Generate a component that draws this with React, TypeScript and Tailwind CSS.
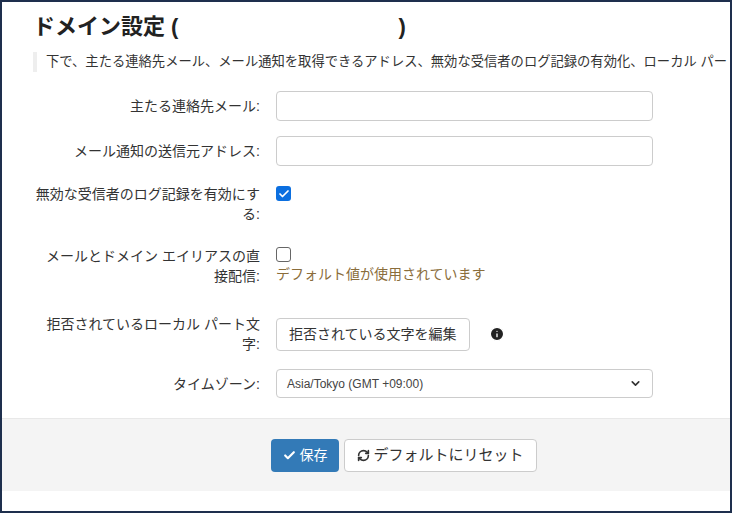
import { Check, RefreshCw, Info, ChevronDown } from 'lucide-react';

const font = { fontFamily: '"Liberation Sans", "Noto Sans CJK JP", sans-serif' };

function Label({ children }: { children: React.ReactNode }) {
  return <div className="w-[233px] shrink-0 pl-[8px] text-right text-[14px] leading-[20px] text-[#333]">{children}</div>;
}

export default function App() {
  return (
    <div style={font} className="w-[732px] h-[513px] overflow-hidden border-2 border-[#1e2f4d] bg-white flex flex-col">
      <h1 className="pl-[31px] pt-[10px] text-[22px] font-bold text-[#222] leading-[30px] whitespace-pre">ドメイン設定 (                                    )</h1>
      <div className="ml-[31px] mt-[10px] border-l-4 border-[#eee] pl-[9px] h-[20px] text-[13.3px] leading-[20px] text-[#333] whitespace-nowrap overflow-hidden">
        下で、主たる連絡先メール、メール通知を取得できるアドレス、無効な受信者のログ記録の有効化、ローカル パート文字
      </div>
      <div className="pl-[25px] mt-[19px] flex flex-col">
        <div className="flex items-center gap-4 h-[30px]">
          <Label>主たる連絡先メール:</Label>
          <div className="w-[377px] h-[30px] border border-[#ccc] rounded" />
        </div>
        <div className="flex items-center gap-4 h-[30px] mt-[15px]">
          <Label>メール通知の送信元アドレス:</Label>
          <div className="w-[377px] h-[30px] border border-[#ccc] rounded" />
        </div>
        <div className="flex gap-4 mt-[18px]">
          <Label>無効な受信者のログ記録を有効にする:</Label>
          <div className="pt-[2px]">
            <div className="w-[15px] h-[15px] rounded-[3px] bg-[#0b6fe0] flex items-center justify-center">
              <Check size={12} strokeWidth={3.5} className="text-white" />
            </div>
          </div>
        </div>
        <div className="flex gap-4 mt-[22px]">
          <Label>メールとドメイン エイリアスの直接配信:</Label>
          <div className="flex flex-col">
            <div className="w-[15px] h-[15px] rounded-[3px] border border-[#666] bg-white mt-[1px]" />
            <div className="text-[14px] text-[#8a6d3b] mt-[3px] leading-[18px]">デフォルト値が使用されています</div>
          </div>
        </div>
        <div className="flex items-center gap-4 mt-[28px]">
          <Label>拒否されているローカル パート文字:</Label>
          <div className="h-[33px] px-[12px] border border-[#ccc] rounded flex items-center text-[14px] text-[#333]">拒否されている文字を編集</div>
          <Info size={16} fill="#222" className="text-white ml-[3px]" />
        </div>
        <div className="flex items-center gap-4 mt-[15px]">
          <Label>タイムゾーン:</Label>
          <div className="w-[377px] h-[29px] border border-[#ccc] rounded flex items-center justify-between px-[10px] text-[12px] text-[#444]">
            <span>Asia/Tokyo (GMT +09:00)</span>
            <ChevronDown size={13} strokeWidth={3} className="text-[#333]" />
          </div>
        </div>
      </div>
      <div className="mt-[20px] h-[73px] bg-[#f4f4f4] border-t border-[#e8e8e8] flex items-center justify-center gap-[5px] pl-[76px]">
        <button className="h-[33px] px-[12px] bg-[#337ab7] rounded text-white text-[14px] flex items-center gap-[3px]">
          <Check size={13} strokeWidth={4} />保存
        </button>
        <button className="h-[33px] px-[12px] bg-white border border-[#ccc] rounded text-[#333] text-[15px] flex items-center gap-[3px]">
          <RefreshCw size={13} strokeWidth={3} />デフォルトにリセット
        </button>
      </div>
    </div>
  );
}
